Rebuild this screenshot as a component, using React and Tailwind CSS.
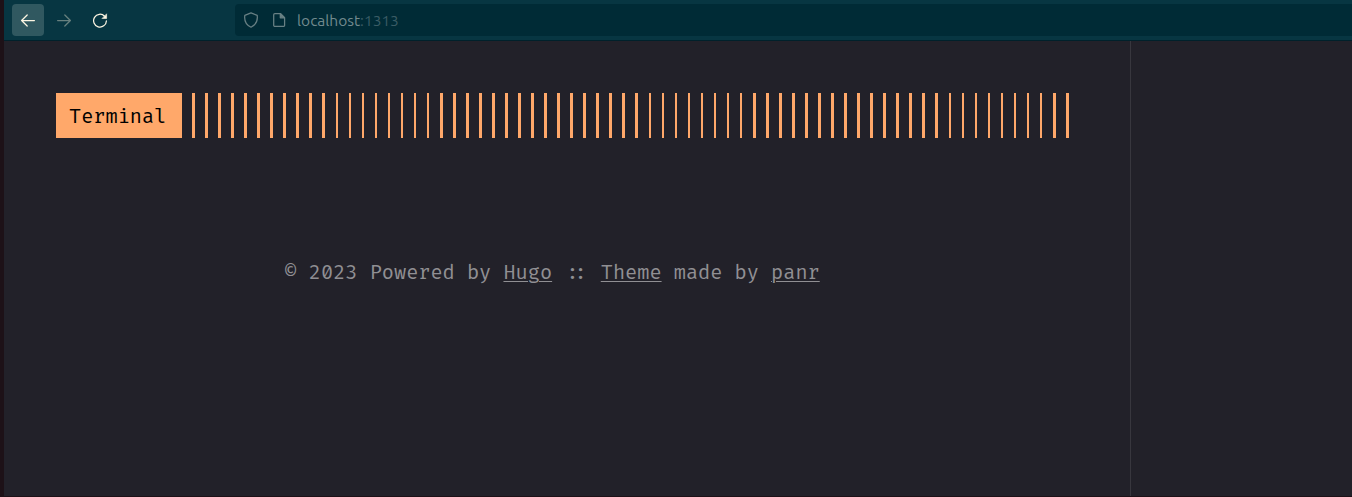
const barGroups = [
  { count: 11, wide: true },
  { count: 8, wide: false },
  { count: 16, wide: true },
  { count: 8, wide: false },
  { count: 15, wide: true },
  { count: 8, wide: false },
  { count: 2, wide: true },
];

function Bars() {
  return (
    <div className="ml-[10px] flex h-[45px] gap-[11px]">
      {barGroups.map((g, i) => (
        <div key={i} className={g.wide ? "flex gap-[10px]" : "flex gap-[11px]"}>
          {Array.from({ length: g.count }, (_, k) => (
            <span key={k} className={g.wide ? "w-[3px] bg-[#ffa86a]" : "w-[2px] bg-[#ffa86a]"} />
          ))}
        </div>
      ))}
    </div>
  );
}

function Toolbar() {
  return (
    <nav className="flex h-[41px] shrink-0 items-start border-b border-[#00212b] bg-[#073642] pt-1 pl-2">
      <button className="flex size-8 items-center justify-center rounded-[4px] bg-[#305860] text-[#fdf6e3]">
        <svg width="16" height="16" viewBox="0 0 16 16" fill="none" stroke="currentColor" strokeWidth="1.25" strokeLinecap="round" strokeLinejoin="round">
          <path d="M14.4 8.5H1.6M7.2 3 1.6 8.5 7.2 14" />
        </svg>
      </button>
      <button className="ml-1 flex size-8 items-center justify-center text-[#68817f]">
        <svg width="16" height="16" viewBox="0 0 16 16" fill="none" stroke="currentColor" strokeWidth="1.25" strokeLinecap="round" strokeLinejoin="round">
          <path d="M1.6 8.5h12.8M8.8 3l5.6 5.5L8.8 14" />
        </svg>
      </button>
      <button className="ml-1 flex size-8 items-center justify-center text-[#fdf6e3]">
        <svg width="16" height="16" viewBox="0 0 16 16" fill="none" stroke="currentColor" strokeWidth="1.25" strokeLinecap="round">
          <path d="M12.6 4.2A6.4 6.4 0 1 0 14.4 8.9" />
          <path d="M14.6 2.2v4.3h-4.3z" fill="currentColor" strokeWidth="0.6" strokeLinejoin="round" />
        </svg>
      </button>
      <div className="ml-[119px] flex h-8 grow items-center rounded-l-[4px] bg-[#002b36] pl-2">
        <svg width="16" height="16" viewBox="0 0 16 16" fill="none" stroke="#688084" strokeWidth="1.25" strokeLinejoin="round">
          <path d="M8 .9 14.2 3.3C14.9 8.6 12.6 13 8 15.2 3.4 13 1.1 8.6 1.8 3.3z" />
        </svg>
        <svg className="ml-3" width="16" height="16" viewBox="0 0 16 16" fill="none" stroke="#688084" strokeWidth="1.25" strokeLinejoin="round">
          <path d="M3.9 1.6h5.7l4 4v7.6a1.2 1.2 0 0 1-1.2 1.2H3.9a1.2 1.2 0 0 1-1.2-1.2V2.8a1.2 1.2 0 0 1 1.2-1.2z" />
          <path d="M9.3 1.8v4h4z" fill="#688084" />
        </svg>
        <div className="ml-[10px] pt-px font-['Ubuntu','Noto_Sans',sans-serif] text-[15.5px] leading-5 text-[#728a8e]">
          localhost<span className="text-[#3a5c65]">:1313</span>
        </div>
      </div>
    </nav>
  );
}

export default function App() {
  return (
    <div className="flex h-[497px] w-[1352px] overflow-hidden bg-[#1d1117]">
      <div className="ml-1 flex h-[496px] grow flex-col bg-[#222129]">
        <Toolbar />
        <main className="flex w-[1127px] grow flex-col border-r border-[#38373e] pt-[52px] pl-[52px] font-['Fira_Code','DejaVu_Sans_Mono',monospace] text-[19.77px]">
          <header className="flex">
            <div className="flex h-[45px] w-[126px] items-center bg-[#ffa86a] pt-[4px] pl-[13px] text-black">Terminal</div>
            <Bars />
          </header>
          <footer className="mt-[119px] ml-[228.5px] whitespace-pre leading-8 text-[#908f93]">
            © 2023 Powered by <a className="underline decoration-1 underline-offset-2">Hugo</a>
            {" :: "}
            <a className="underline decoration-1 underline-offset-2">Theme</a> made by{" "}
            <a className="underline decoration-1 underline-offset-2">panr</a>
          </footer>
        </main>
      </div>
    </div>
  );
}
